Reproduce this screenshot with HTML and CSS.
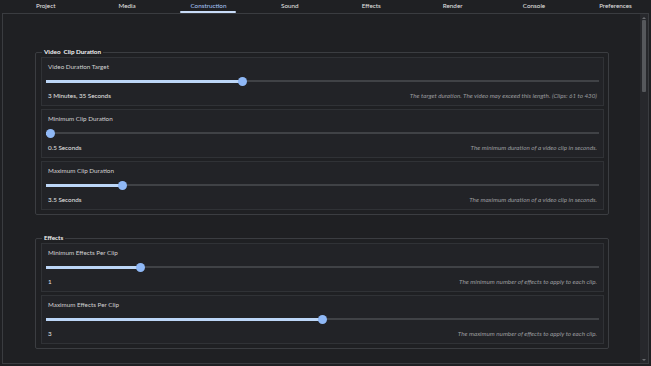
FILE: index.html
```html
<!DOCTYPE html>
<html>
<head>
<meta charset="utf-8">
<link rel="stylesheet" href="styles.css">
</head>
<body>
<div class="tabs">
  <div class="tab">Project</div>
  <div class="tab">Media</div>
  <div class="tab active">Construction</div>
  <div class="tab">Sound</div>
  <div class="tab">Effects</div>
  <div class="tab">Render</div>
  <div class="tab">Console</div>
  <div class="tab">Preferences</div>
</div>
<div class="pane">
  <div class="content">
    <fieldset class="group">
      <legend>Video&nbsp; Clip Duration</legend>
      <div class="card">
        <div class="label">Video Duration Target</div>
        <div class="slider" style="--v:0.353"><div class="track"><div class="fill"></div></div><div class="knob"></div></div>
        <div class="meta"><span class="value">3 Minutes, 35 Seconds</span><span class="desc">The target duration. The video may exceed this length. (Clips: 61 to 430)</span></div>
      </div>
      <div class="card">
        <div class="label">Minimum Clip Duration</div>
        <div class="slider" style="--v:0"><div class="track"><div class="fill"></div></div><div class="knob"></div></div>
        <div class="meta"><span class="value">0.5 Seconds</span><span class="desc">The minimum duration of a video clip in seconds.</span></div>
      </div>
      <div class="card">
        <div class="label">Maximum Clip Duration</div>
        <div class="slider" style="--v:0.132"><div class="track"><div class="fill"></div></div><div class="knob"></div></div>
        <div class="meta"><span class="value">3.5 Seconds</span><span class="desc">The maximum duration of a video clip in seconds.</span></div>
      </div>
    </fieldset>
    <fieldset class="group">
      <legend>Effects</legend>
      <div class="card">
        <div class="label">Minimum Effects Per Clip</div>
        <div class="slider" style="--v:0.165"><div class="track"><div class="fill"></div></div><div class="knob"></div></div>
        <div class="meta"><span class="value">1</span><span class="desc">The minimum number of effects to apply to each clip.</span></div>
      </div>
      <div class="card">
        <div class="label">Maximum Effects Per Clip</div>
        <div class="slider" style="--v:0.5"><div class="track"><div class="fill"></div></div><div class="knob"></div></div>
        <div class="meta"><span class="value">3</span><span class="desc">The maximum number of effects to apply to each clip.</span></div>
      </div>
    </fieldset>
  </div>
  <div class="scrollbar">
    <div class="arrow up"></div>
    <div class="sb-track"><div class="thumb"></div></div>
    <div class="arrow down"></div>
  </div>
</div>
</body>
</html>
```
FILE: styles.css
```css
html, body {
  margin: 0;
  padding: 0;
  background: #1f2023;
  width: 651px;
  height: 366px;
  overflow: hidden;
  font-family: Lato, "Liberation Sans", sans-serif;
  color: #d6d6d6;
}

.tabs {
  display: grid;
  grid-template-columns: repeat(8, 81.4px);
  padding-left: 5px;
  height: 13px;
  overflow: hidden;
}

.tab {
  position: relative;
  text-align: center;
  font-size: 6.3px;
  line-height: 12px;
  color: #e4e4e4;
  white-space: nowrap;
}

.tab.active {
  color: #a8c7fa;
}

.tab.active::after {
  content: "";
  position: absolute;
  left: 50%;
  bottom: 0;
  width: 56px;
  margin-left: -28px;
  height: 2px;
  border-radius: 1px;
  background: #c8dcf8;
}

.pane {
  margin: 0 2px;
  height: 349px;
  border: 1px solid #3a3c40;
  display: flex;
}

.content {
  flex: 1;
  padding: 34px 31px 0 32px;
  overflow: hidden;
}

.group {
  margin: 0 0 19px 0;
  padding: 1px 4px 4px 5px;
  border: 1px solid #3b3d41;
  border-radius: 2px;
  min-width: 0;
}

.group legend {
  padding: 0 2px;
  margin-left: 1px;
  font-size: 6.3px;
  line-height: 8px;
  font-weight: 700;
  color: #f2f2f2;
  white-space: pre;
}

.card {
  height: 37px;
  padding: 5px 4px 5px 4px;
  border: 1px solid #303236;
  background: #222327;
  display: flex;
  flex-direction: column;
}

.card + .card {
  margin-top: 3px;
}

.label {
  padding: 0 2px;
  font-size: 6.3px;
  line-height: 8px;
  color: #d2d2d2;
}

.slider {
  position: relative;
  height: 10px;
  margin-top: 5px;
  display: flex;
  align-items: center;
}

.track {
  width: 100%;
  height: 2px;
  background: #404246;
}

.fill {
  height: 3px;
  margin-top: -0.5px;
  width: calc(4px + var(--v) * (100% - 9px));
  background: #bcd6f7;
}

.knob {
  position: absolute;
  top: 0.5px;
  left: calc(var(--v) * (100% - 9px));
  width: 9px;
  height: 9px;
  border-radius: 50%;
  background: #8fb8f6;
}

.meta {
  margin-top: 6px;
  padding: 0 2px;
  display: flex;
  justify-content: space-between;
  font-size: 6.3px;
  line-height: 8px;
}

.value {
  color: #e6e6e6;
}

.desc {
  font-style: italic;
  color: #9a9b9e;
}

.scrollbar {
  width: 8px;
  display: flex;
  flex-direction: column;
  align-items: center;
  background: #27282c;
  padding: 3px 0 2px;
}

.arrow {
  width: 0;
  height: 0;
  border-left: 2px solid transparent;
  border-right: 2px solid transparent;
}

.arrow.up {
  border-bottom: 2px solid #6a6c70;
}

.arrow.down {
  border-top: 2px solid #6a6c70;
}

.sb-track {
  flex: 1;
  width: 100%;
  padding: 1px 2px;
  box-sizing: border-box;
}

.thumb {
  height: 72px;
  background: #56585c;
  border-radius: 1px;
}
```
